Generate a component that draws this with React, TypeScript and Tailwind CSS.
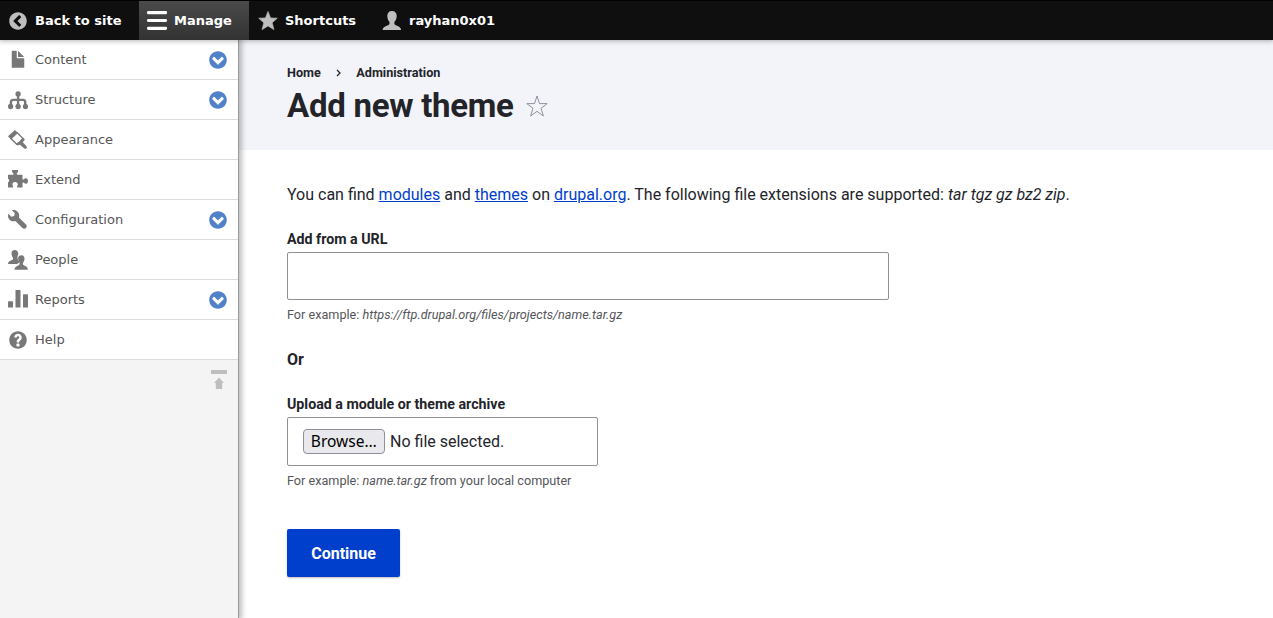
import type { ReactNode } from "react";

const Icon = ({ children, className = "text-[#787878]" }: { children: ReactNode; className?: string }) => (
  <svg width="20" height="20" viewBox="0 0 20 20" fill="currentColor" className={`shrink-0 ${className}`}>
    {children}
  </svg>
);

const DISC_CHEVRON =
  "M8.002 1c-3.868 0-7.002 3.133-7.002 7s3.134 7 7.002 7c3.865 0 7-3.133 7-7s-3.135-7-7-7zm4.459 6.336l-4.14 4.168c-.188.189-.494.189-.682 0l-4.144-4.168c-.188-.188-.188-.496 0-.684l1.034-1.035c.188-.19.494-.19.683 0l2.769 2.8 2.767-2.8c.188-.19.495-.19.685 0l1.028 1.035c.188.188.188.495 0 .684z";

const PERSON =
  "M10 0C6.800 0 5.300 2.100 5.300 5c0 2.600 1 4.500 2 5.800.5.700.4 2.300-.4 2.900C5.100 15 1 15.200.6 18.900h18.500c-.4-3.700-4.300-3.900-6.100-5.200-.8-.6-.9-2.200-.4-2.900 1-1.300 2.100-3.200 2.100-5.800C14.700 2.100 13.200 0 10 0z";

const icons: Record<string, ReactNode> = {
  content: (
    <g transform="translate(0 -.5) scale(1.25)">
      <path d="M12.502 7h-5c-.276 0-.502-.225-.502-.5v-5c0-.275-.225-.5-.5-.5h-3c-.276 0-.5.225-.5.5v12.600c0 .275.225.5.5.5h9c.275 0 .5-.225.5-.5v-6.600c0-.275-.225-.5-.498-.5zM8.502 6h4c.275 0 .34-.159.146-.354l-4.293-4.292c-.195-.195-.353-.129-.353.146v4c0 .275.225.5.5.5z" />
    </g>
  ),
  structure: (
    <>
      <circle cx="10.100" cy="3.900" r="2.650" />
      <circle cx="2.600" cy="16.500" r="2.650" />
      <circle cx="10.100" cy="16.500" r="2.650" />
      <circle cx="17.500" cy="16.500" r="2.650" />
      <path d="M2.900 16V12.200Q2.900 9.900 5.200 9.900H15Q17.200 9.900 17.200 12.200V16M10.100 4V16" fill="none" stroke="currentColor" strokeWidth="2.400" />
    </>
  ),
  appearance: (
    <>
      <path d="M0 6.300L7 0 9.900 2.900 3.100 9.500z" />
      <path d="M9 2.600L15 8.600 11.500 12.300 8.600 14.100 2.300 8" fill="none" stroke="currentColor" strokeWidth="1.400" />
      <path d="M15 7.700L16.900 9.600 14.800 12.200 18.500 16.200Q19.300 17.200 18.600 18.200 17.500 19.300 16.300 18.600L12 14.800 9.300 15.500 8 14.200 11.600 11.600z" />
    </>
  ),
  extend: (
    <path d="M0 4.800H5.200Q6 4.200 5.200 3.300L4.100 2.100V0H10V2.100L8.900 3.300Q8.500 4.200 9.200 4.800H14.500V9.200Q15.200 10 16 9.200 17.500 7.600 19 8.600 20 9.300 20 11T19 13.400Q17.500 14.400 16 12.800 15.200 12 14.500 12.800V17.500H9.300Q8.700 16.500 9.400 15.600 10.300 14.500 9.500 13.200 8.700 12.100 7.100 12.100T4.700 13.200Q3.900 14.500 4.800 15.600 5.500 16.500 4.900 17.500H0V12.600Q1.200 11.500 1.200 10.500T0 8.500z" />
  ),
  configuration: (
    <g transform="scale(1.25)">
      <path d="M14.416 11.586l-5.666-5.665c.15-.449.252-.921.252-1.421 0-2.485-2.016-4.500-4.502-4.500-.505 0-.981.102-1.434.255l2.431 2.431-.588 2.196-2.196.588-2.445-2.445c-.162.464-.268.956-.268 1.475 0 2.486 2.014 4.500 4.500 4.500.5 0 .972-.102 1.421-.251l5.667 5.665c.781.781 2.047.781 2.828 0s.781-2.047 0-2.828z" />
    </g>
  ),
  people: (
    <>
      <path d="M6.700 0C4.500 0 3.500 1.500 3.500 3.400c0 1.800.6 3 1.300 4 .5.800.4 2-.2 2.400C3.100 10.700.3 10.900 0 14h8.900c.5-.5 1.200-.8 1.900-1.100.4-.5.3-1.200-.1-1.700C10.100 10.300 9.500 9 9.500 7.300c0-1.100.3-2.200.8-2.900C10.400 1.800 9.100 0 6.700 0z" />
      <path d="M13.300 5.300c-2.200 0-3.200 1.400-3.200 3.300 0 1.800.6 3 1.300 4 .5.800.4 2-.2 2.400-1.500 1-4.400 1.400-4.700 4.800H20c-.3-3.400-3.100-3.800-4.600-4.800-.6-.4-.7-1.600-.2-2.400.7-1 1.300-2.200 1.300-4 0-1.900-1-3.300-3.200-3.300z" />
    </>
  ),
  reports: (
    <>
      <rect x="0" y="11.200" width="5" height="6.300" rx=".6" />
      <rect x="7.500" y="0" width="5" height="17.500" rx=".6" />
      <rect x="15" y="4.200" width="5" height="13.300" rx=".6" />
    </>
  ),
  help: (
    <g transform="scale(1.25)">
      <path d="M8.002 1c-3.868 0-7.002 3.134-7.002 7s3.134 7 7.002 7c3.865 0 7-3.134 7-7s-3.135-7-7-7zm3 5c0 .551-.16 1.085-.477 1.586l-.158.22c-.07.093-.189.241-.361.393-.168.148-.35.299-.545.447l-.203.189-.141.129-.096.17-.021.235v.63h-2.001v-.704c.026-.396.078-.73.204-.999.125-.269.271-.498.439-.688l.225-.21-.01-.015.176-.14.137-.128c.186-.139.357-.277.516-.417l.148-.18c.098-.152.168-.323.168-.518 0-.552-.447-1-1-1s-1.002.448-1.002 1h-2c0-1.657 1.343-3 3.002-3 1.656 0 3 1.343 3 3zm-1.750 6.619c0 .344-.281.625-.625.625h-1.250c-.345 0-.626-.281-.626-.625v-1.238c0-.344.281-.625.626-.625h1.250c.344 0 .625.281.625.625v1.238z" />
    </g>
  ),
};

const menu = [
  { icon: "content", label: "Content", expandable: true },
  { icon: "structure", label: "Structure", expandable: true },
  { icon: "appearance", label: "Appearance" },
  { icon: "extend", label: "Extend" },
  { icon: "configuration", label: "Configuration", expandable: true },
  { icon: "people", label: "People" },
  { icon: "reports", label: "Reports", expandable: true },
  { icon: "help", label: "Help" },
];

function Toolbar() {
  return (
    <nav className="relative z-20 flex h-10 shrink-0 border-t border-black bg-[#0f0f0f] font-['DejaVu_Sans',sans-serif] text-[13px] font-bold text-white shadow-[0_0_5px_1px_rgba(0,0,0,0.3)]">
      <a className="flex w-[139px] items-center gap-[7px] pl-2">
        <Icon className="mt-px text-[#bebebe]">
          <g transform="scale(1.25) rotate(90 8 8)">
            <path d={DISC_CHEVRON} />
          </g>
        </Icon>
        Back to site
      </a>
      <a className="flex w-[110px] items-center gap-[7px] bg-linear-to-b from-[#4b4b4b] to-[#323232] pl-2">
        <Icon className="mt-px text-white">
          <rect x="0" y="0" width="20" height="3.200" rx="1.300" />
          <rect x="0" y="7.900" width="20" height="3.200" rx="1.300" />
          <rect x="0" y="15.700" width="20" height="3.200" rx="1.300" />
        </Icon>
        Manage
      </a>
      <a className="flex w-[125px] items-center gap-[7px] pl-[9px]">
        <Icon className="mt-px text-[#bebebe]">
          <path d="M10 .4L12.600 6.900 19.300 7.200 14.200 11.700 16 18.700 10 14.900 4 18.700 5.800 11.700.7 7.200 7.400 6.900z" strokeWidth=".6" strokeLinejoin="round" stroke="currentColor" />
        </Icon>
        Shortcuts
      </a>
      <a className="flex items-center gap-[7px] pl-2">
        <Icon className="mt-px text-[#bebebe]">
          <path d={PERSON} />
        </Icon>
        rayhan0x01
      </a>
    </nav>
  );
}

function Tray() {
  return (
    <aside className="relative z-10 flex w-[239px] shrink-0 flex-col border-r border-[#999] bg-[#f4f4f4] font-['DejaVu_Sans',sans-serif] text-[13px] text-[#565656] shadow-[1px_0_5px_2px_rgba(0,0,0,0.25)]">
      <ul>
        {menu.map((item) => (
          <li key={item.label} className="flex h-10 items-center border-b border-[#ddd] bg-white pt-px pr-[10px] pl-2">
            <Icon>{icons[item.icon]}</Icon>
            <span className="ml-[7px] flex-1 pb-px">{item.label}</span>
            {item.expandable && (
              <Icon className="text-[#5181c6]">
                <path transform="scale(1.25)" d={DISC_CHEVRON} />
              </Icon>
            )}
          </li>
        ))}
      </ul>
      <button className="mt-[10px] mr-[11px] self-end text-[#bebebe]" aria-label="Horizontal orientation">
        <svg width="16" height="20" viewBox="0 0 16 20" fill="currentColor">
          <rect x="0" y="0" width="16" height="4" rx=".6" />
          <path d="M8 7.400L12.900 12.900H11.200V18.400Q11.200 19 10.600 19H5.400Q4.800 19 4.800 18.400V12.900H3.100z" />
        </svg>
      </button>
    </aside>
  );
}

export default function App() {
  return (
    <div className="flex h-[618px] w-full flex-col overflow-hidden bg-white">
      <Toolbar />
      <div className="flex min-h-0 flex-1">
        <Tray />
        <main className="flex-1 font-['Roboto',sans-serif] text-base text-[#232429]">
          <header className="h-[110px] bg-[#f3f4f9] pt-6 pl-12">
            <div className="flex h-[18px] items-center text-[12.640px] leading-[18px] font-bold">
              <span>Home</span>
              <svg width="6" height="8" viewBox="0 0 6 8" className="mr-[14.500px] ml-[15px]" fill="none" stroke="currentColor" strokeWidth="1.300">
                <path d="M1 1L4 4 1 7" />
              </svg>
              <span>Administration</span>
            </div>
            <div className="mt-[3px] flex h-[42px] items-center">
              <h1 className="text-[33px] leading-[42px] font-bold tracking-[-0.270px]">Add new theme</h1>
              <svg width="24" height="24" viewBox="0 0 24 24" className="-mt-px ml-[11px]" fill="none" stroke="#8e929c" strokeWidth="1">
                <path d="M12 2L14.500 9.600H22.200L16 14.300 18.400 22 12 17.300 5.600 22 8 14.300 1.800 9.600H9.500z" />
              </svg>
            </div>
          </header>
          <form className="flex flex-col items-start pt-[33px] pl-12">
            <p className="h-6 leading-6">
              You can find <a className="text-[#003ecc] underline">modules</a> and <a className="text-[#003ecc] underline">themes</a> on{" "}
              <a className="text-[#003ecc] underline">drupal.org</a>. The following file extensions are supported: <em>tar tgz gz bz2 zip</em>.
            </p>
            <label className="mt-[23px] h-[18px] text-[14.220px] leading-[18px] font-bold">Add from a URL</label>
            <input type="text" className="mt-1 h-12 w-[602px] rounded-[2px] border border-[#919297] bg-white px-[15px] outline-none" />
            <p className="h-6 pt-1.5 text-[12.650px] leading-[18px] text-[#55565b]">
              For example: <em>https://ftp.drupal.org/files/projects/name.tar.gz</em>
            </p>
            <p className="mt-6 h-6 leading-6 font-bold">Or</p>
            <label className="mt-[23px] h-[18px] text-[14.220px] leading-[18px] font-bold">Upload a module or theme archive</label>
            <div className="mt-1 flex h-[49px] w-[311px] items-center rounded-[2px] border border-[#919297] px-[15px]">
              <button type="button" className="h-[25px] w-[82px] rounded-[4px] border border-[#8f8f9d] bg-[#e9e9ed] font-['Noto_Sans',sans-serif] text-[15.500px] leading-[21px] whitespace-nowrap text-black">
                Browse<span className="tracking-[0.500px]">…</span>
              </button>
              <span className="ml-[5px]">No file selected.</span>
            </div>
            <p className="h-6 pt-1.5 text-[12.650px] leading-[18px] text-[#55565b]">
              For example: <em>name.tar.gz</em> from your local computer
            </p>
            <button type="button" className="mt-[39px] h-12 w-[113px] rounded-[2px] bg-[#003ecc] pt-0.5 font-bold text-white shadow-[0_1px_2px_rgba(0,0,0,0.25)]">
              Continue
            </button>
          </form>
        </main>
      </div>
    </div>
  );
}
